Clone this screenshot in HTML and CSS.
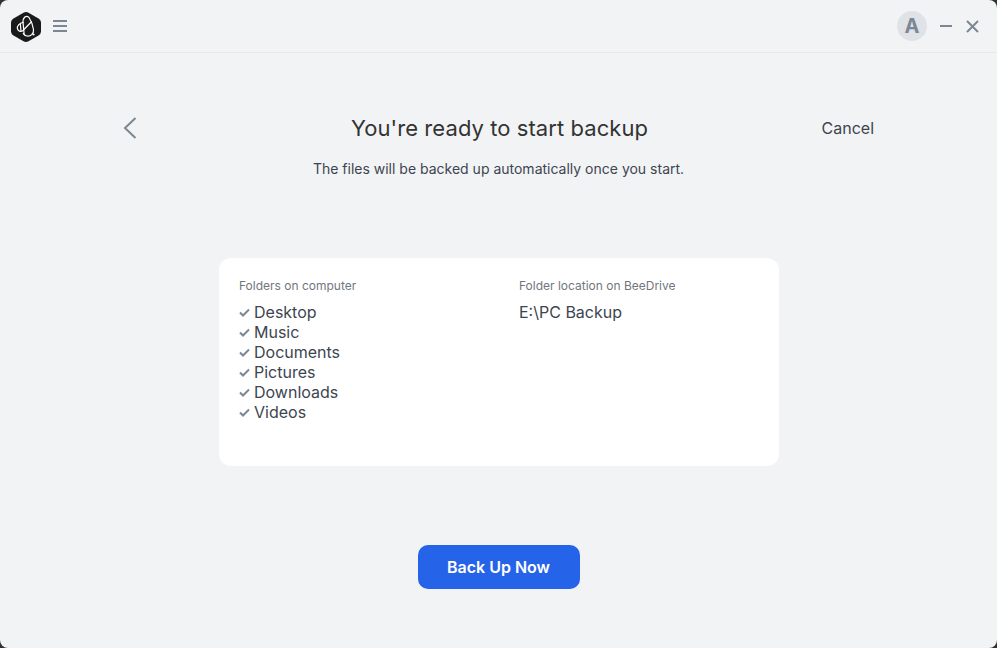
FILE: index.html
```html
<!DOCTYPE html>
<html lang="en">
<head>
    <meta charset="UTF-8">
    <meta name="viewport" content="width=device-width, initial-scale=1.0">
    <title>Backup - BeeDrive</title>
    <link rel="stylesheet" href="styles.css">
</head>
<body>
    <div class="window">
        <header class="titlebar">
            <div class="titlebar-left">
                <svg class="logo" width="32" height="32" viewBox="0 0 32 32">
                    <path d="M13.500 1.700 Q16 0.300 18.500 1.700 L28.500 7.500 Q31 9 31 11.500 V20.500 Q31 23 28.500 24.500 L18.500 30.300 Q16 31.700 13.500 30.300 L3.500 24.500 Q1 23 1 20.500 V11.500 Q1 9 3.500 7.500 Z" fill="#1a1a1a"/>
                    <g fill="none" stroke="#fff" stroke-width="1.2">
                        <path d="M13 12 C12.500 6.500 16.500 3.500 19 6.500 C21 9.500 23 15 23.500 18.500 C24 23 20.500 25.500 17 25 C15 24.700 13.700 23.500 13 22"/>
                        <path d="M13 11 L14.200 24"/>
                        <path d="M13 11.500 C9.500 12 6.500 15 7.500 18 C8.500 20.800 11.500 20.800 13 19.500 L21.700 10.500"/>
                        <path d="M10.300 13 L11 20"/>
                    </g>
                    <circle cx="23.500" cy="23.500" r="1.100" fill="#fff"/>
                </svg>
                <button class="icon-btn" aria-label="Menu">
                    <svg width="14" height="12" viewBox="0 0 14 12"><path d="M0 1h14M0 6h14M0 11h14" stroke="#7b8794" stroke-width="2"/></svg>
                </button>
            </div>
            <div class="titlebar-right">
                <div class="avatar">A</div>
                <button class="icon-btn" aria-label="Minimize">
                    <svg width="12" height="2" viewBox="0 0 12 2"><path d="M0 1h12" stroke="#7b8794" stroke-width="2"/></svg>
                </button>
                <button class="icon-btn" aria-label="Close">
                    <svg width="13" height="13" viewBox="0 0 13 13"><path d="M1 1l11 11M12 1L1 12" stroke="#7b8794" stroke-width="2"/></svg>
                </button>
            </div>
        </header>

        <main class="content">
            <div class="page-head">
                <button class="back-btn" aria-label="Back">
                    <svg width="14" height="22" viewBox="0 0 14 22"><path d="M12.500 1 L2 11 L12.500 21" fill="none" stroke="#7b8794" stroke-width="2"/></svg>
                </button>
                <h1 class="page-title">You're ready to start backup</h1>
                <a class="cancel-link">Cancel</a>
            </div>
            <p class="page-sub">The files will be backed up automatically once you start.</p>

            <section class="summary-card">
                <div class="summary-col">
                    <h2 class="col-label">Folders on computer</h2>
                    <ul class="folder-list">
                        <li><svg class="check" viewBox="0 0 11 9"><path d="M1 4.500 L4 7.500 L10 1.500" fill="none" stroke="#7b8794" stroke-width="2"/></svg>Desktop</li>
                        <li><svg class="check" viewBox="0 0 11 9"><path d="M1 4.500 L4 7.500 L10 1.500" fill="none" stroke="#7b8794" stroke-width="2"/></svg>Music</li>
                        <li><svg class="check" viewBox="0 0 11 9"><path d="M1 4.500 L4 7.500 L10 1.500" fill="none" stroke="#7b8794" stroke-width="2"/></svg>Documents</li>
                        <li><svg class="check" viewBox="0 0 11 9"><path d="M1 4.500 L4 7.500 L10 1.500" fill="none" stroke="#7b8794" stroke-width="2"/></svg>Pictures</li>
                        <li><svg class="check" viewBox="0 0 11 9"><path d="M1 4.500 L4 7.500 L10 1.500" fill="none" stroke="#7b8794" stroke-width="2"/></svg>Downloads</li>
                        <li><svg class="check" viewBox="0 0 11 9"><path d="M1 4.500 L4 7.500 L10 1.500" fill="none" stroke="#7b8794" stroke-width="2"/></svg>Videos</li>
                    </ul>
                </div>
                <div class="summary-col">
                    <h2 class="col-label">Folder location on BeeDrive</h2>
                    <p class="location">E:\PC Backup</p>
                </div>
            </section>

            <button class="start-button">Back Up Now</button>
        </main>
    </div>
</body>
</html>
```

FILE: styles.css
```css
* {
    margin: 0;
    padding: 0;
    box-sizing: border-box;
    font-family: Inter, 'Noto Sans', sans-serif;
}

:root {
    --bg: #f2f3f5;
    --text: #3d4550;
    --muted: #7b8794;
    --primary: #2563e8;
}

body {
    width: 997px;
    height: 648px;
    overflow: hidden;
    background: #2f332f;
    color: var(--text);
}

button {
    background: none;
    border: none;
    cursor: pointer;
}

.window {
    height: 100%;
    display: flex;
    flex-direction: column;
    background: var(--bg);
    border-radius: 8px;
    overflow: hidden;
}

.titlebar {
    height: 53px;
    padding: 0 18px 0 10px;
    display: flex;
    justify-content: space-between;
    align-items: center;
    border-bottom: 1px solid #e6e8eb;
}

.titlebar-left,
.titlebar-right {
    display: flex;
    align-items: center;
}

.logo {
    margin-top: 2px;
    margin-right: 11px;
}

.icon-btn {
    display: flex;
    align-items: center;
    justify-content: center;
}

.avatar {
    width: 30px;
    height: 30px;
    border-radius: 50%;
    background: #dfe2e6;
    color: var(--muted);
    font-size: 20px;
    font-weight: 700;
    line-height: 30px;
    text-align: center;
    margin-right: 13px;
}

.titlebar-right .icon-btn + .icon-btn {
    margin-left: 14px;
}

.content {
    flex: 1;
    display: flex;
    flex-direction: column;
    align-items: center;
}

.page-head {
    width: 759px;
    margin-top: 60px;
    margin-left: 2px;
    display: grid;
    grid-template-columns: 1fr auto 1fr;
    align-items: center;
}

.page-title {
    font-size: 22px;
    font-weight: 400;
    line-height: 30px;
    letter-spacing: 0.07px;
    color: #333;
}

.back-btn {
    display: flex;
    padding-left: 3px;
}

.cancel-link {
    justify-self: end;
    padding-right: 5px;
    font-size: 16px;
}

.page-sub {
    margin-top: 16px;
    font-size: 14px;
    line-height: 20px;
}

.summary-card {
    width: 560px;
    height: 208px;
    margin-top: 79px;
    margin-left: 1px;
    padding: 20px;
    background: #fff;
    border-radius: 12px;
    display: grid;
    grid-template-columns: 280px 1fr;
}

.col-label {
    font-size: 12px;
    font-weight: 400;
    line-height: 15px;
    color: #71767d;
    margin-bottom: 9px;
}

.folder-list {
    list-style: none;
}

.folder-list li,
.location {
    font-size: 16px;
    line-height: 20px;
}

.folder-list li {
    display: flex;
    align-items: center;
}

.check {
    width: 11px;
    height: 9px;
    margin-right: 4px;
}

.start-button {
    margin-top: 79px;
    width: 162px;
    height: 44px;
    background: var(--primary);
    color: white;
    border-radius: 10px;
    font-size: 16px;
    font-weight: 600;
}
```
